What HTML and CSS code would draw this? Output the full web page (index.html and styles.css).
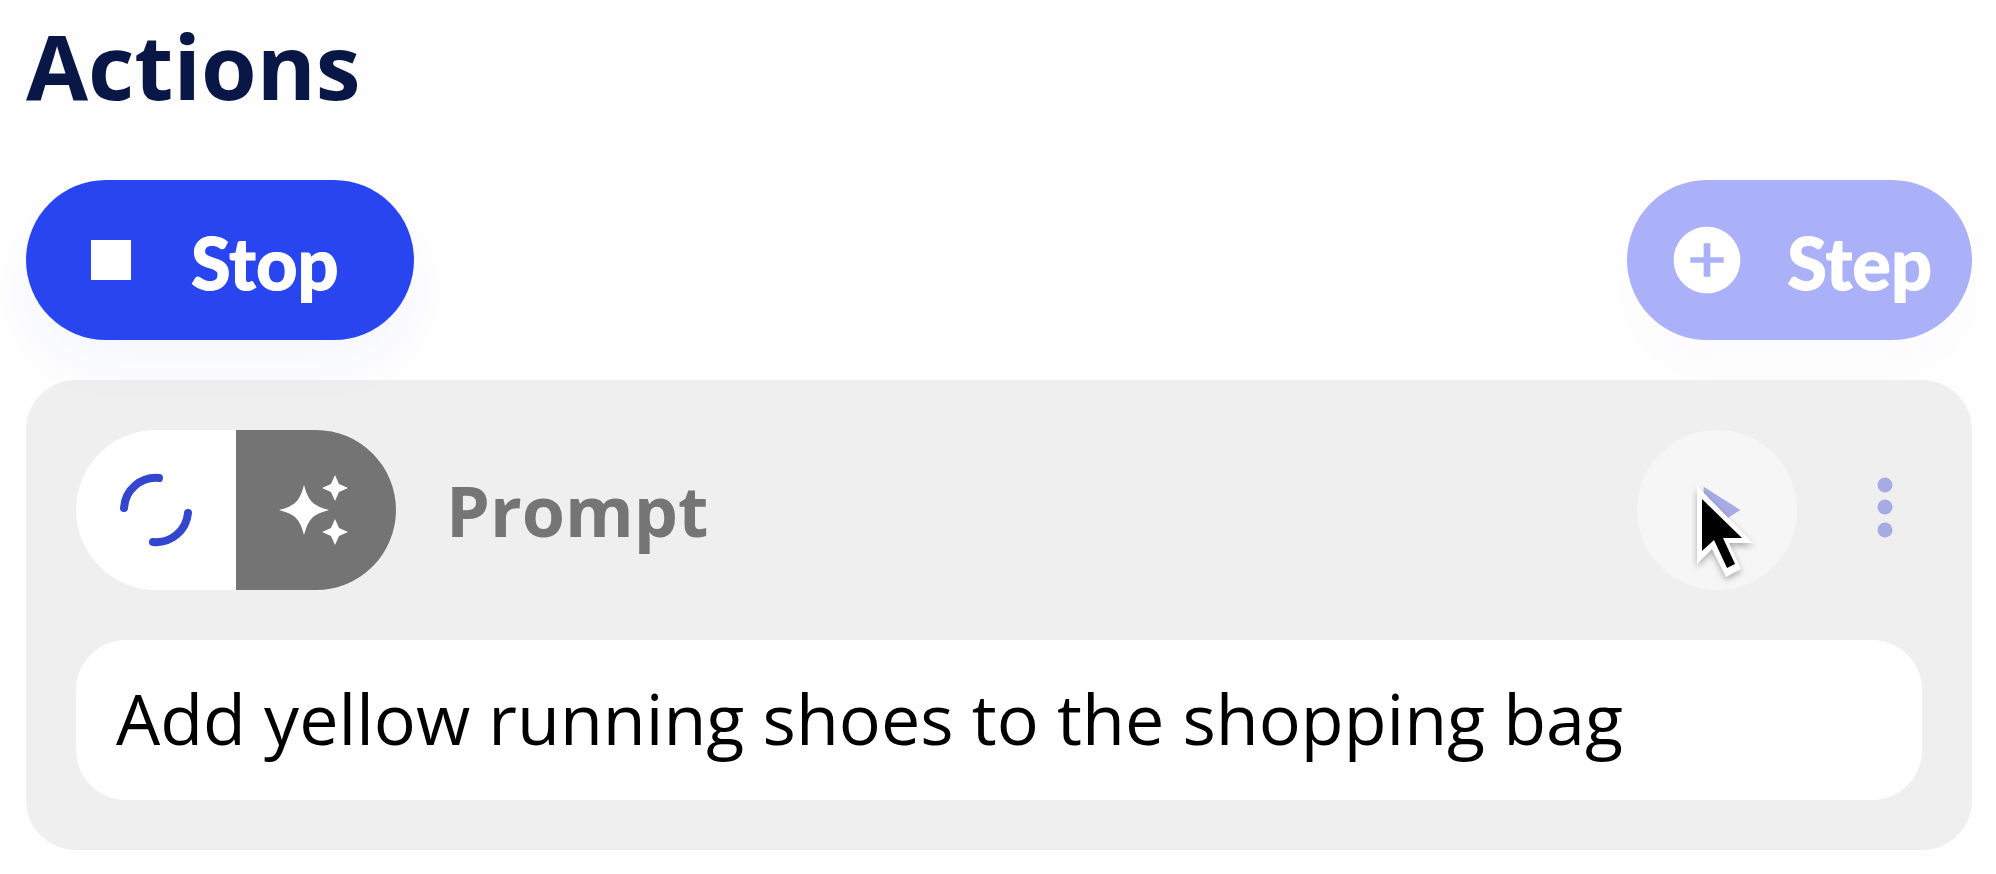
FILE: index.html
```
<!DOCTYPE html>
<html lang="en">
<head>
    <meta charset="UTF-8">
    <meta name="viewport" content="width=device-width, initial-scale=1.0">
    <title>Actions</title>
    <link rel="stylesheet" href="styles.css">
</head>
<body>
    <main class="panel">
        <h1 class="title">Actions</h1>

        <div class="toolbar">
            <button type="button" class="btn btn-stop">
                <svg class="icon" viewBox="0 0 24 24" aria-hidden="true">
                    <path d="M6 6h12v12H6z"/>
                </svg>
                <span class="btn-label">Stop</span>
            </button>
            <button type="button" class="btn btn-step" disabled>
                <svg class="icon" viewBox="0 0 24 24" aria-hidden="true">
                    <path d="M12 2C6.48 2 2 6.48 2 12s4.48 10 10 10 10-4.48 10-10S17.52 2 12 2zm5 10.8h-4V17h-2v-4.2H7v-1.6h4V7h2v4.2h4z"/>
                </svg>
                <span class="btn-label">Step</span>
            </button>
        </div>

        <section class="card">
            <div class="card-header">
                <div class="badge">
                    <span class="badge-status">
                        <svg class="icon spinner" viewBox="0 0 80 80" aria-hidden="true">
                            <path d="M8 38A32 32 0 0 1 43 8M72 43A32 32 0 0 1 37 72"/>
                        </svg>
                    </span>
                    <span class="badge-type">
                        <svg class="icon" viewBox="0 0 80 80" aria-hidden="true">
                            <path d="M28 15Q31 27 36 32T53 40Q41 43 36 48T28 65Q25 53 20 48T3 40Q15 37 20 32T28 15z"/>
                            <path d="M59 5l4 9 9 4-9 4-4 9-4-9-9-4 9-4z"/>
                            <path d="M59 49l4 9 9 4-9 4-4 9-4-9-9-4 9-4z"/>
                        </svg>
                    </span>
                </div>
                <label class="card-title" for="prompt">Prompt</label>
                <button type="button" class="btn-play" aria-label="Run step" disabled>
                    <svg class="icon" viewBox="0 0 24 24" aria-hidden="true">
                        <path d="M8 5v14l11-7z"/>
                    </svg>
                    <svg class="cursor" viewBox="0 0 60 94" aria-hidden="true">
                        <path class="cursor-edge" d="M1 0v78l15-15 14 28 15-8-12-26h24z"/>
                        <path d="M6 13v52l12-11 13 28 8-4-12-26h19z"/>
                    </svg>
                </button>
                <button type="button" class="btn-menu" aria-label="More options" disabled>
                    <svg class="dots" viewBox="0 0 16 66" aria-hidden="true">
                        <circle cx="8" cy="8" r="7.5"/>
                        <circle cx="8" cy="30" r="7.5"/>
                        <circle cx="8" cy="53" r="7.5"/>
                    </svg>
                </button>
            </div>
            <input type="text" class="prompt" id="prompt" value="Add yellow running shoes to the shopping bag">
        </section>
    </main>
</body>
</html>
```
FILE: styles.css
```
* {
    box-sizing: border-box;
}
body {
    margin: 0;
    background-color: #fefefe;
    font-family: "Open Sans", "Noto Sans", sans-serif;
    color: #000;
}
button {
    border: none;
    padding: 0;
    cursor: pointer;
}
.panel {
    padding: 5px 24px 24px 26px;
}
.title {
    margin: 0 0 55px;
    font-size: 90px;
    line-height: 120px;
    font-weight: 700;
    color: #081745;
}
.icon {
    display: block;
    width: 80px;
    height: 80px;
    fill: currentColor;
}

/* Toolbar */
.toolbar {
    display: flex;
    justify-content: space-between;
    margin-bottom: 40px;
}
.btn {
    display: flex;
    align-items: center;
    gap: 40px;
    height: 160px;
    border-radius: 80px;
    font-family: Lato, sans-serif;
    font-size: 72px;
    font-weight: 900;
    color: #fff;
}
.btn-label {
    padding-top: 4px;
    -webkit-text-stroke: 1px currentColor;
}
.btn-stop {
    padding: 0 75px 0 45px;
    background-color: #2945f0;
    box-shadow: 0 30px 50px rgba(41, 69, 240, 0.03);
}
.btn-step {
    padding: 0 40px;
    background-color: #abb1f8;
    box-shadow: 0 30px 50px rgba(41, 69, 240, 0.01);
}

/* Step card */
.card {
    padding: 50px;
    border-radius: 50px;
    background-color: #efefef;
}
.card-header {
    display: flex;
    align-items: center;
    gap: 50px;
    margin-bottom: 50px;
}
.badge {
    display: flex;
    border-radius: 80px;
    overflow: hidden;
}
.badge-status,
.badge-type {
    display: flex;
    align-items: center;
    justify-content: center;
    width: 160px;
    height: 160px;
}
.badge-status {
    background-color: #fff;
    color: #3346cd;
}
.badge-type {
    background-color: #747474;
    color: #fff;
}
.spinner {
    fill: none;
    stroke: currentColor;
    stroke-width: 8;
    stroke-linecap: round;
}
.card-title {
    flex: 1;
    font-size: 70px;
    font-weight: 700;
    color: #757575;
}
.btn-play {
    position: relative;
    display: flex;
    align-items: center;
    justify-content: center;
    width: 160px;
    height: 160px;
    border-radius: 50%;
    background-color: #f6f6f6;
    color: #a7abe4;
}
.btn-menu {
    display: flex;
    justify-content: center;
    width: 75px;
    background: none;
    color: #a7abe4;
}
.dots {
    width: 16px;
    height: 66px;
    fill: currentColor;
}
.cursor {
    position: absolute;
    top: 56px;
    left: 59px;
    width: 60px;
    height: 94px;
    filter: drop-shadow(0 3px 3px rgba(0, 0, 0, 0.3));
}
.cursor-edge {
    fill: #fff;
}
.prompt {
    display: block;
    width: 100%;
    height: 160px;
    padding: 0 40px 4px;
    border: none;
    border-radius: 50px;
    background-color: #fff;
    font-family: inherit;
    font-size: 70px;
    color: #000;
}
```
